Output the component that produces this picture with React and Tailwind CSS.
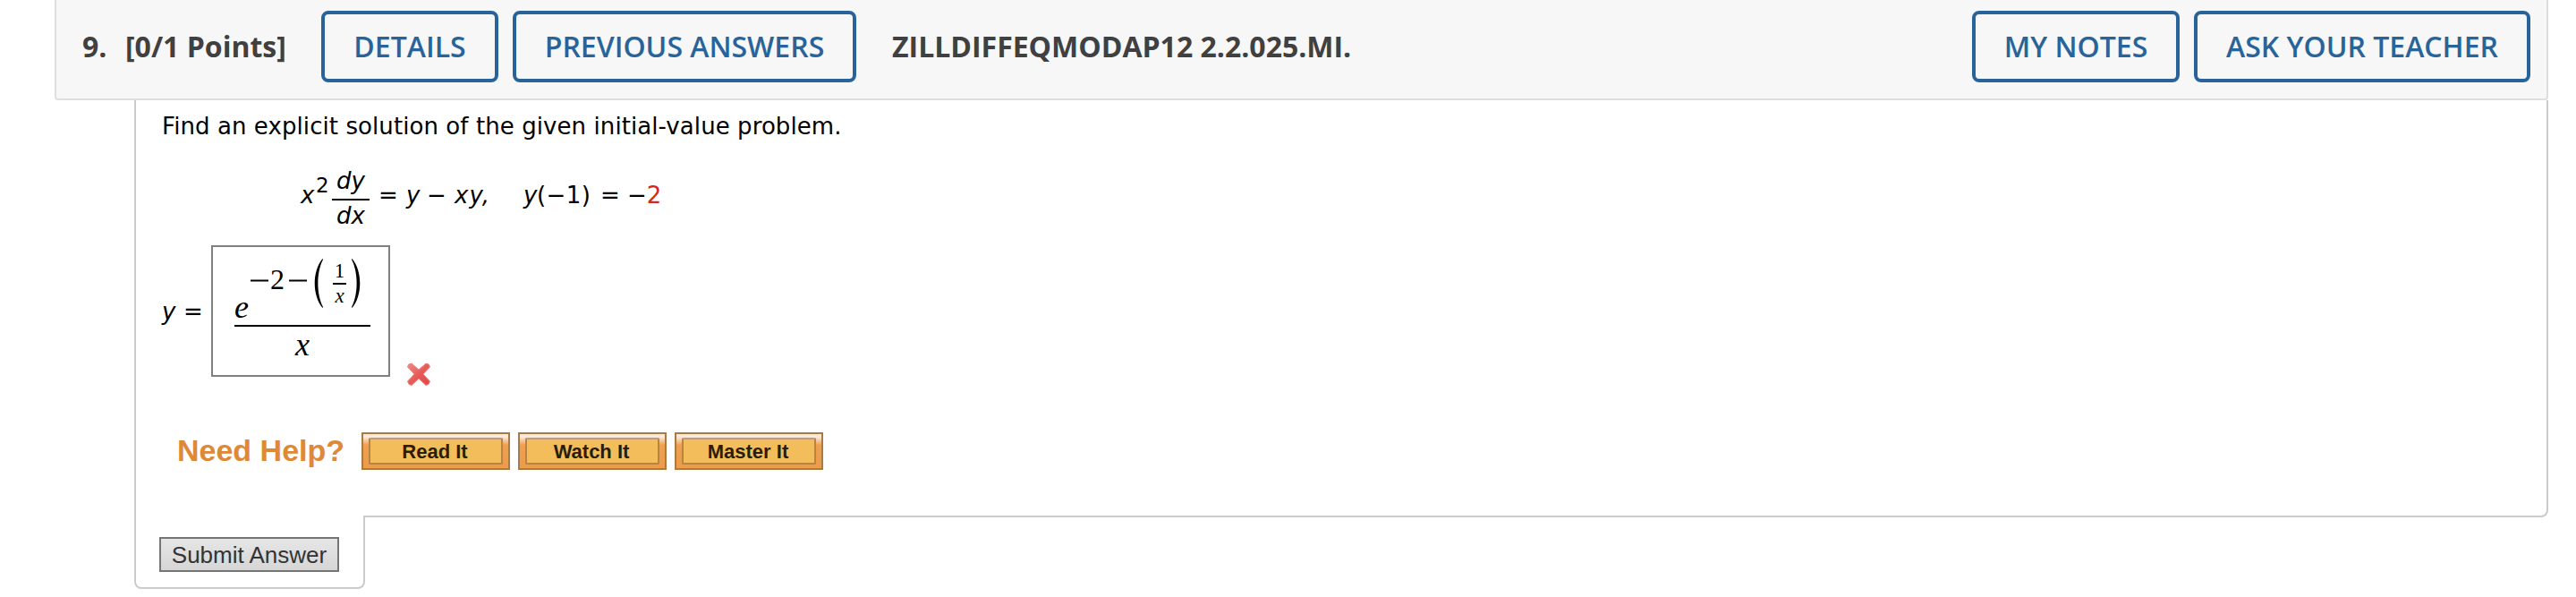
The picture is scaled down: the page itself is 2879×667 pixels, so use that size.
const verdana = "font-['DejaVu_Sans',Verdana,sans-serif]";
const arial = "font-['Liberation_Sans',Arial,sans-serif]";

function HeaderButton({ children, className }) {
  return (
    <button className={`h-20 shrink-0 rounded-lg border-4 border-[#286499] text-center text-[32px] leading-[68px] font-semibold whitespace-nowrap text-[#286499] ${className}`}>
      {children}
    </button>
  );
}

function HelpButton({ children }) {
  return (
    <button className="flex h-[42px] w-[166px] shrink-0 border-2 border-[#a97a41] bg-linear-to-b from-[#fbe9dc] from-8% via-[#eea050] via-32% to-[#ec9c4a] px-[6px] pt-1 pb-1">
      <span className={`${arial} block h-[30px] w-[150px] rounded-[2px] border-2 border-[#b98440] border-t-[#bf9d78] bg-[#f3bd5b] pr-[2px] text-center text-[22px] leading-[28px] font-bold whitespace-nowrap text-[#2a1d08]`}>
        {children}
      </span>
    </button>
  );
}

function Header() {
  return (
    <header className="ml-[61px] flex h-28 w-[2787px] rounded-b-[4px] border-x-2 border-b-2 border-[#dedede] bg-[#f7f7f7] pt-3 pr-[18px] pl-[29px] font-['Open_Sans',sans-serif]">
      <div className="w-[48px] text-[32px] leading-[80px] font-bold text-[#404040]">9.</div>
      <div className="w-[219px] text-[32px] leading-[80px] font-bold whitespace-nowrap text-[#404040]">[0/1 Points]</div>
      <HeaderButton className="w-[198px]">DETAILS</HeaderButton>
      <HeaderButton className="ml-4 w-[384px]">PREVIOUS ANSWERS</HeaderButton>
      <div className="ml-10 text-[32px] leading-[80px] font-bold whitespace-nowrap text-[#404040]">ZILLDIFFEQMODAP12 2.2.025.MI.</div>
      <div className="ml-auto flex gap-4">
        <HeaderButton className="w-[232px]">MY NOTES</HeaderButton>
        <HeaderButton className="w-[376px]">ASK YOUR TEACHER</HeaderButton>
      </div>
    </header>
  );
}

function Equation() {
  return (
    <div className="flex h-[80px] pl-[155px] text-[26px] leading-[40px] whitespace-nowrap">
      <i className="w-[17px] pt-2">x</i>
      <span className="w-[18px] text-[23px] leading-[34px]">2</span>
      <div className="flex w-[42px] flex-col text-center italic">
        <span className="h-[34px] border-b-2 border-black leading-[24px]">dy</span>
        <span className="leading-[34px]">dx</span>
      </div>
      <span className="w-[41px] pt-2 pl-[10px]">=</span>
      <i className="w-[23px] pt-2">y</i>
      <span className="w-[31px] pt-2">−</span>
      <i className="w-[77px] pt-2 tracking-[1px]">xy,</i>
      <i className="w-[15px] pt-2">y</i>
      <span className="w-[71px] pt-2 tracking-[0.4px]">(−1)</span>
      <span className="w-[30px] pt-2">=</span>
      <span className="pt-2">−<span className="text-[#d9261c]">2</span></span>
    </div>
  );
}

function Answer() {
  return (
    <div className="flex h-[160px]">
      <div className="flex w-[55px] pt-[54px] text-[26px] leading-[40px]">
        <i className="w-[24px]">y</i>
        <span>=</span>
      </div>
      <div className="h-[147px] w-[200px] border-2 border-[#808080] pt-3 pl-6 font-['Liberation_Serif',serif]">
        <div className="flex h-[77px] w-[152px] border-b-2 border-black leading-[40px] whitespace-nowrap">
          <i className="w-[17px] pt-[35px] text-[36px]">e</i>
          <svg className="mt-[24px] h-[3px] w-[22px]" viewBox="0 0 22 3"><path d="M1 1.5H21" stroke="#000" strokeWidth="2" /></svg>
          <span className="w-[21px] pl-px pt-[4px] text-[32px]">2</span>
          <svg className="mt-[24px] h-[3px] w-[22px]" viewBox="0 0 22 3"><path d="M1 1.5H21" stroke="#000" strokeWidth="2" /></svg>
          <svg className="mt-[1px] ml-[7px] h-[55px] w-[10px]" viewBox="0 0 10 55"><path d="M9.5 0C-2.2 14-2.2 41 9.5 55L10 54C2.500 40 2.500 15 10 1Z" /></svg>
          <div className="ml-[11px] flex w-[15px] flex-col text-center text-[23px]">
            <span className="h-[30px] border-b-2 border-black leading-[29px]">1</span>
            <i className="leading-[26px]">x</i>
          </div>
          <svg className="mt-[1px] ml-[6px] h-[55px] w-[10px]" viewBox="0 0 10 55"><path d="M0.500 0C12.200 14 12.200 41 .5 55L0 54C7.500 40 7.500 15 0 1Z" /></svg>
        </div>
        <i className="block w-[152px] text-center text-[36px] leading-[40px]">x</i>
      </div>
      <svg className="mt-[130px] ml-[18px] h-[28px] w-[28px]" viewBox="0 0 28 28">
        <defs>
          <linearGradient id="cross" x1="0" y1="0" x2="1" y2="1">
            <stop offset="0" stopColor="#f08c88" />
            <stop offset=".5" stopColor="#e65c59" />
            <stop offset="1" stopColor="#e24642" />
          </linearGradient>
        </defs>
        <path d="M6 2L14 9 22 2Q26 2 26.500 6L19 14 26.500 22Q26 26 22 26.500L14 19 6 26.500Q2 26 1.500 22L9 14 1.500 6Q2 2 6 2Z" fill="url(#cross)" stroke="#f08884" strokeLinejoin="round" />
      </svg>
    </div>
  );
}

export default function App() {
  return (
    <main className="h-[667px] w-[2879px] overflow-hidden bg-white text-black">
      <Header />
      <section className={`${verdana} ml-[150px] flex h-[466px] w-[2698px] flex-col rounded-br-lg border-x-2 border-b-2 border-[#cbcbcb] pl-[29px]`}>
        <p className="mt-[9px] h-[69px] text-[26px] leading-[40px] tracking-[0.08px] whitespace-nowrap">Find an explicit solution of the given initial-value problem.</p>
        <Equation />
        <div className="mt-1"><Answer /></div>
        <div className="mt-[49px] flex gap-[9px]">
          <div className={`${arial} w-[214px] shrink-0 pl-[17px] text-[34px] leading-[41px] font-bold whitespace-nowrap text-[#de8935]`}>Need Help?</div>
          <HelpButton>Read It</HelpButton>
          <HelpButton>Watch It</HelpButton>
          <HelpButton>Master It</HelpButton>
        </div>
      </section>
      <div className="ml-[150px] flex w-[2698px]">
        <div className="-mt-[2px] h-[82px] w-[258px] rounded-b-lg border-x-2 border-b-2 border-[#cbcbcb] bg-white pt-6 pl-[26px]">
          <button className={`${arial} block h-[39px] w-[201px] border-2 border-[#757575] bg-linear-to-b from-[#e6e6e6] to-[#d6d6d6] text-center text-[26px] leading-[34px] whitespace-nowrap text-[#333]`}>Submit Answer</button>
        </div>
      </div>
    </main>
  );
}
